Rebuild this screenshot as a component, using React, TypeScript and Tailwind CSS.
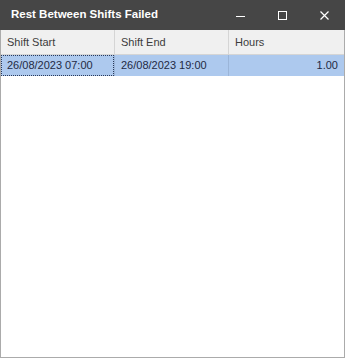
import React from "react";

export default function App() {
  return (
    <div className="w-[345px] h-[358px] flex flex-col bg-white border border-t-0 border-[#ababab] box-border" style={{ fontFamily: '"Liberation Sans", Arial, sans-serif' }}>
      <div className="h-[30px] flex items-center bg-[#464646] shrink-0 -mx-px">
        <div className="pl-[11px] text-white font-bold text-[11.5px] flex-1">Rest Between Shifts Failed</div>
        <div className="flex h-full items-center">
          <div className="w-[42px] h-full flex items-center justify-center">
            <svg width="9" height="9" viewBox="0 0 9 9"><path d="M0 5.5h9" stroke="#fff" strokeWidth="1" /></svg>
          </div>
          <div className="w-[42px] h-full flex items-center justify-center">
            <svg width="9" height="9" viewBox="0 0 9 9"><rect x="0.5" y="0.5" width="8" height="8" fill="none" stroke="#fff" strokeWidth="1" /></svg>
          </div>
          <div className="w-[42px] h-full flex items-center justify-center">
            <svg width="9" height="9" viewBox="0 0 9 9"><path d="M0.5 0.5L8.5 8.5M8.5 0.5L0.5 8.5" stroke="#fff" strokeWidth="1.2" /></svg>
          </div>
        </div>
      </div>
      <div className="flex h-[25px] bg-[#f0f0f0] border-b border-[#d5d5d5] text-[11px] text-[#3c3c3c] shrink-0">
        <div className="w-[114px] border-r border-[#d5d5d5] pl-[6px] flex items-center">Shift Start</div>
        <div className="w-[114px] border-r border-[#d5d5d5] pl-[6px] flex items-center">Shift End</div>
        <div className="flex-1 pl-[6px] flex items-center">Hours</div>
      </div>
      <div className="flex h-[21px] bg-[#adc9ee] text-[11px] text-[#1f2a44] shrink-0">
        <div className="w-[114px] border-r border-[#9bb5d8] flex items-center">
          <div className="w-full h-full border border-dotted border-[#2a3a5a] pl-[5px] flex items-center">26/08/2023 07:00</div>
        </div>
        <div className="w-[114px] border-r border-[#9bb5d8] pl-[6px] flex items-center">26/08/2023 19:00</div>
        <div className="flex-1 pr-[6px] flex items-center justify-end">1.00</div>
      </div>
      <div className="flex-1" />
    </div>
  );
}
